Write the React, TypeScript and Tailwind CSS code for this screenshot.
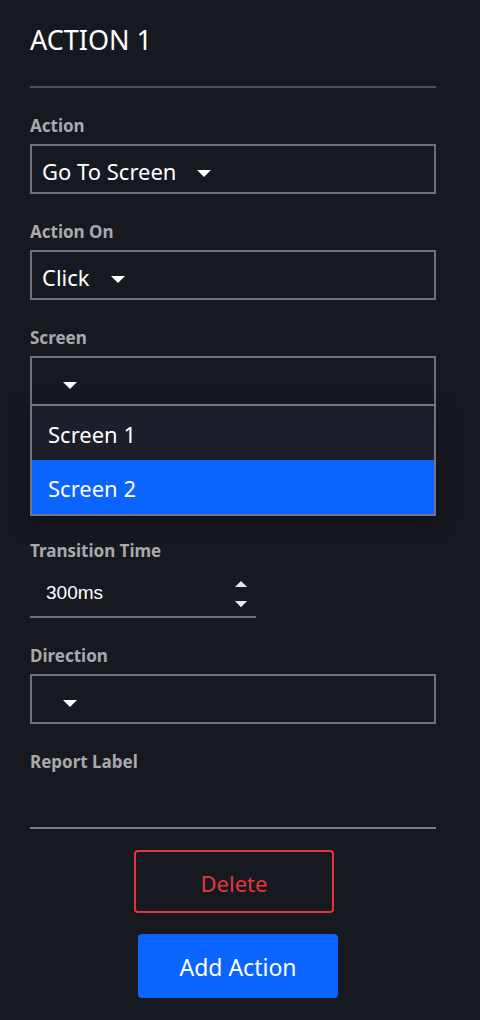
import React from 'react';

const Caret: React.FC<{ up?: boolean; className?: string }> = ({ up, className }) => (
    <svg width="16" height="8" viewBox="0 0 16 8" className={className}>
        {up ? <polygon points="1,8 15,8 8,1" fill="currentColor" /> : <polygon points="1,0 15,0 8,7" fill="currentColor" />}
    </svg>
);

const Label: React.FC<{ children: React.ReactNode }> = ({ children }) => (
    <p className="pt-[2px] text-[17px] leading-[24px] font-bold text-[#a9a9ac]">{children}</p>
);

const Select: React.FC<{ value?: string }> = ({ value }) => (
    <div className="mt-[6px] h-[50px] w-[406px] border-2 border-[#6e707c] flex items-center pl-[10px] text-white">
        {value && <span className="pt-[4px] text-[22px] leading-none">{value}</span>}
        <Caret className="ml-[20px] mt-[10px] text-white" />
    </div>
);

const App: React.FC = () => {
    return (
        <div className="min-h-[1020px] w-[480px] bg-[#171921] px-[30px] pt-[22px] font-['Noto_Sans',sans-serif]">
            <h1 className="text-[27px] leading-[36px] text-white">ACTION 1</h1>
            <div className="mt-[28px] h-[2px] w-[406px] bg-[#4f515c]" />

            <div className="mt-[24px]">
                <Label>Action</Label>
                <Select value="Go To Screen" />
            </div>

            <div className="mt-[24px]">
                <Label>Action On</Label>
                <Select value="Click" />
            </div>

            <div className="mt-[24px]">
                <Label>Screen</Label>
                <Select />
                {/* open options list */}
                <div className="-mt-[2px] w-[406px] border-2 border-[#72747f] shadow-[0_6px_18px_rgba(0,0,0,0.35)]">
                    <div className="h-[54px] bg-[#1c1e29] flex items-center pl-[16px] pt-[2px] text-[22px] text-white">Screen 1</div>
                    <div className="h-[54px] bg-[#0a64ff] flex items-center pl-[16px] pt-[2px] text-[22px] text-white">Screen 2</div>
                </div>
            </div>

            <div className="mt-[21px]">
                <Label>Transition Time</Label>
                <div className="mt-[7px] h-[48px] w-[226px] border-b-2 border-[#6e707c] flex items-center pl-[16px] pr-[8px]">
                    <span className="flex-1 pt-[1px] text-[19px] text-white font-['Liberation_Sans',Arial,sans-serif]">300ms</span>
                    <div className="flex flex-col gap-[14px] pt-[2px] text-[#e6e6e6]">
                        <Caret up className="w-[14px] h-[7px]" />
                        <Caret className="w-[14px] h-[7px]" />
                    </div>
                </div>
            </div>

            <div className="mt-[24px]">
                <Label>Direction</Label>
                <Select />
            </div>

            <div className="mt-[24px]">
                <Label>Report Label</Label>
                <div className="mt-[5px] h-[50px] w-[406px] border-b-2 border-[#7a7c87]" />
            </div>

            <div className="mt-[21px] flex flex-col">
                <button className="ml-[104px] h-[63px] w-[200px] rounded-[4px] border-2 border-[#e3363b] pt-[4px] text-[22px] text-[#e3363b]">
                    Delete
                </button>
                <button className="ml-[108px] mt-[21px] h-[64px] w-[200px] rounded-[4px] bg-[#0a64ff] pt-[2px] text-[23px] text-white">
                    Add Action
                </button>
            </div>
        </div>
    );
};

export default App;
